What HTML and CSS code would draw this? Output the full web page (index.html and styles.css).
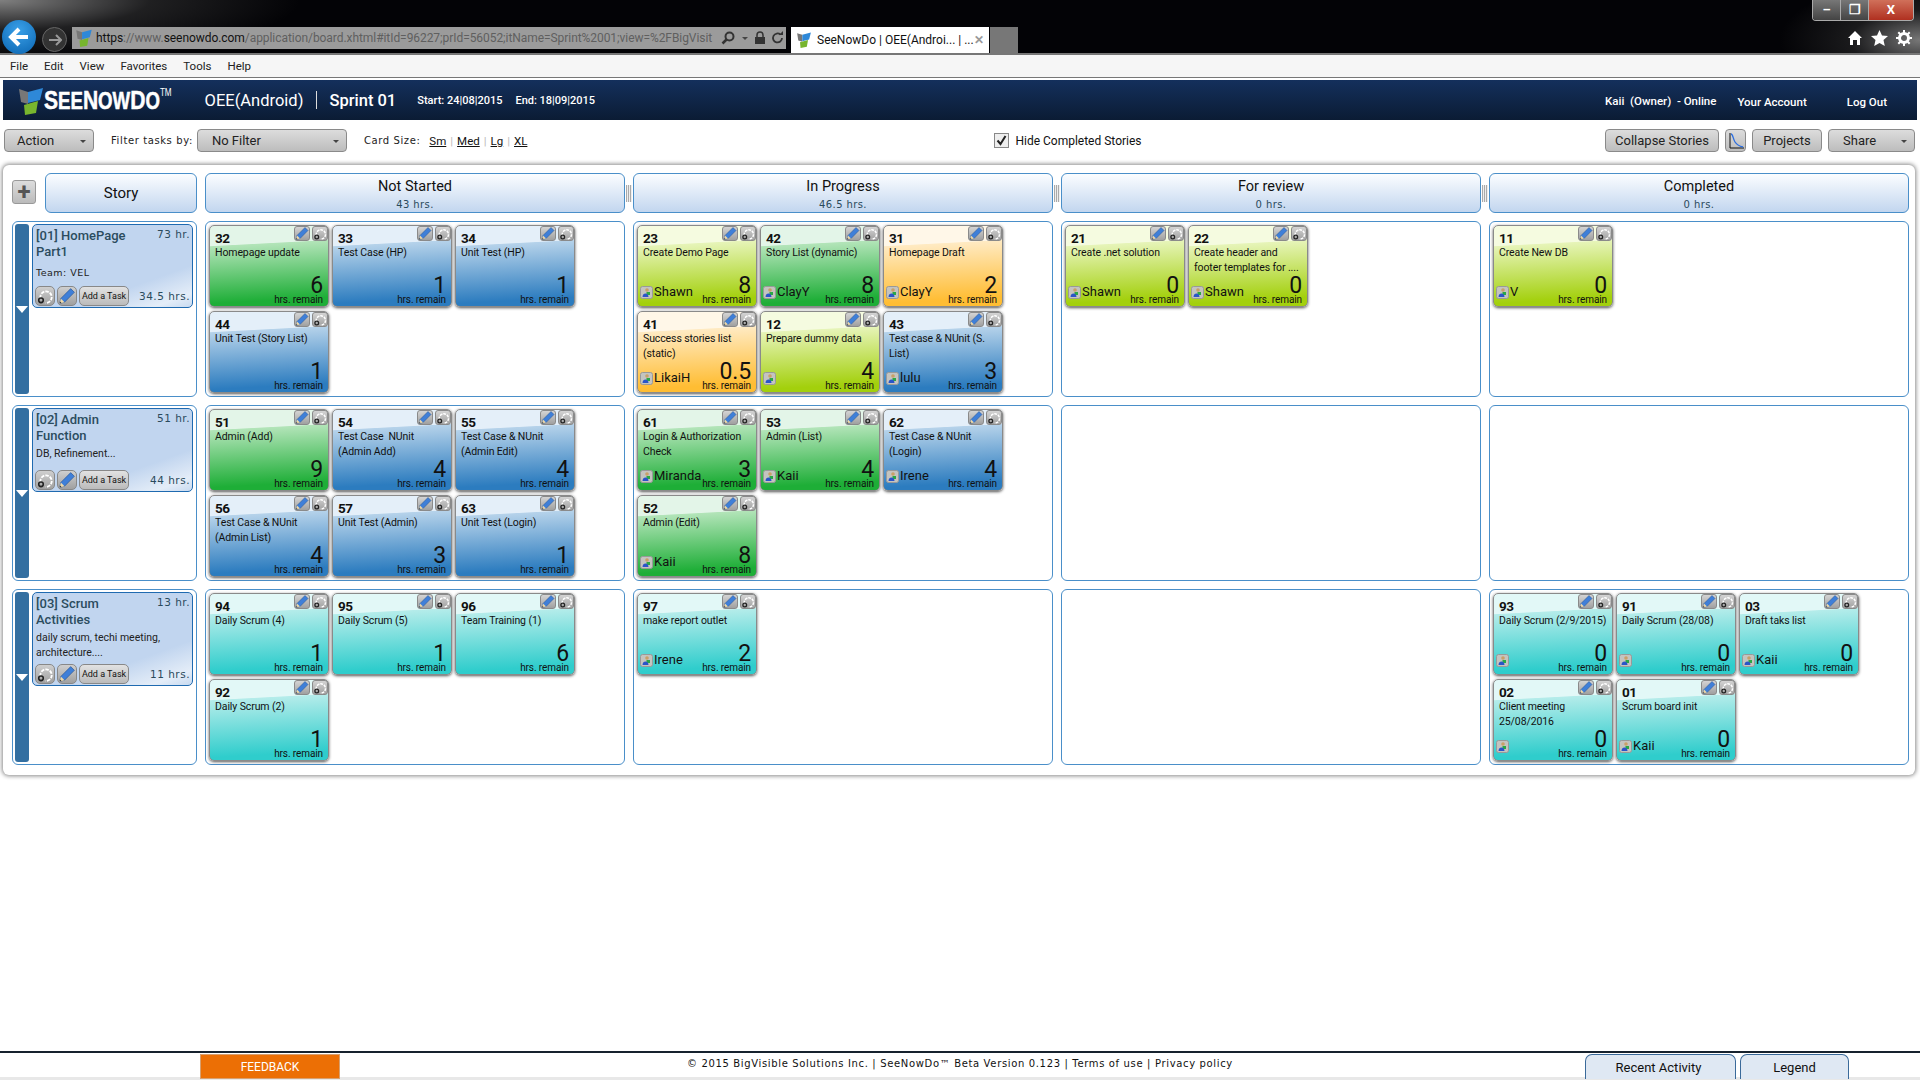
FILE: index.html
```html
<!DOCTYPE html>
<html lang="en">
<head>
  <meta charset="UTF-8">
  <title>SeeNowDo | OEE(Android)</title>
  <link rel="stylesheet" href="styles.css">
</head>
<body>
  <svg class="defs" width="0" height="0">
    <symbol id="i-pencil" viewBox="2 1 13 13">
      <path d="M2.500 13.500l1-4 8-8 3 3-8 8z" fill="#3f7fd8" stroke="#25508f" stroke-width=".5"/>
      <path d="M2.500 13.500l1-4 3 3z" fill="#f0d9a8"/>
      <path d="M2.500 13.500l.4-1.600 1.200 1.200z" fill="#333"/>
    </symbol>
    <symbol id="i-loop" viewBox="2 0 14 14">
      <path d="M5 9a5 5 0 1 1 4.500 4" fill="none" stroke="#fff" stroke-width="1.600" stroke-dasharray="3 1"/>
      <circle cx="5.500" cy="10.800" r="2" fill="none" stroke="#222" stroke-width="1.400"/>
    </symbol>
    <symbol id="i-user" viewBox="0 0 13 13">
      <rect x=".5" y=".5" width="12" height="12" rx="2" fill="#c4c4c0" stroke="#999"/>
      <circle cx="7" cy="4" r="1.800" fill="#c9a067"/>
      <path d="M6.500 6h3.500v3h-3.500z" fill="#2aa845"/>
      <path d="M2.500 11c0-2.500 1.500-3.500 3-3.500s3 1 3 3.500z" fill="#2a55c8"/>
    </symbol>
    <symbol id="i-logo" viewBox="0 0 24 28">
      <path d="M0 2l9 3v12l-7-2z" fill="#777"/>
      <path d="M9 5l15-4-3 12-12 3z" fill="#2e88d8"/>
      <path d="M5 18l14-4-2 12-11 2z" fill="#77b52e"/>
    </symbol>
  </svg>

  <div class="browser-bar">
    <div class="window-btns">
      <span class="win-btn">&#8211;</span><span class="win-btn">&#10064;</span><span class="win-btn win-close">X</span>
    </div>
    <div class="nav-back">
      <svg width="22" height="20" viewBox="0 0 22 20"><path d="M11 2l-8 8 8 8M3 10h17" fill="none" stroke="#fff" stroke-width="4"/></svg>
    </div>
    <div class="nav-forward">
      <svg width="14" height="12" viewBox="0 0 14 12"><path d="M8 1l5 5-5 5M13 6h-12" fill="none" stroke="#999" stroke-width="2"/></svg>
    </div>
    <div class="address">
      <svg class="favicon"><use href="#i-logo"></use></svg>
      <span class="url"><b>https</b>://www.<b>seenowdo.com</b>/application/board.xhtml#itId=96227;prId=56052;itName=Sprint%2001;view=%2FBigVisit</span>
      <span class="addr-icons">
        <svg width="16" height="16" viewBox="0 0 16 16"><circle cx="9.500" cy="6.500" r="4" fill="none" stroke="#333" stroke-width="2"/><path d="M6.500 9.500l-4 4" stroke="#333" stroke-width="2.500"/></svg>
        <svg width="8" height="16" viewBox="0 0 8 16"><path d="M1 7h6l-3 3z" fill="#444"/></svg>
        <svg width="12" height="16" viewBox="0 0 12 16"><rect x="1" y="7" width="10" height="7" fill="#333"/><path d="M3 7v-2a3 3 0 0 1 6 0v2" fill="none" stroke="#333" stroke-width="1.500"/></svg>
        <svg width="13" height="16" viewBox="0 0 13 16"><path d="M11 8a4.500 4.500 0 1 1-1.500-3.400" fill="none" stroke="#333" stroke-width="1.800"/><path d="M8 5h4v-4z" fill="#333"/></svg>
      </span>
    </div>
    <div class="tab">
      <svg class="tab-icon"><use href="#i-logo"></use></svg>
      <span class="tab-title">SeeNowDo | OEE(Androi... | ...</span>
      <span class="tab-close">&#10005;</span>
    </div>
    <div class="new-tab"></div>
    <div class="browser-tools">
      <svg width="16" height="16" viewBox="0 0 16 16"><path d="M8 1l7 7h-2v7h-3v-5h-4v5h-3v-7h-2z" fill="#fff"/></svg>
      <svg width="17" height="16" viewBox="0 0 17 16"><path d="M8.500 0l2.500 5.500 6 .6-4.500 4 1.300 5.900-5.300-3-5.300 3 1.300-5.900-4.500-4 6-.6z" fill="#fff"/></svg>
      <svg width="16" height="16" viewBox="0 0 16 16"><circle cx="8" cy="8" r="4.500" fill="none" stroke="#fff" stroke-width="3"/><path d="M8 0v3M8 13v3M0 8h3M13 8h3M2.300 2.300l2 2M11.700 11.700l2 2M13.700 2.300l-2 2M4.300 11.700l-2 2" stroke="#fff" stroke-width="2"/></svg>
    </div>
  </div>

  <div class="menu-bar">
    <span>File</span><span>Edit</span><span>View</span><span>Favorites</span><span>Tools</span><span>Help</span>
  </div>

  <header class="app-header">
    <svg class="logo-mark"><use href="#i-logo"></use></svg>
    <span class="logo-box"><span class="logo-text">S<small>EE</small>N<small>OW</small>D<small>O</small><sup>TM</sup></span></span>
    <span class="project">OEE(Android)</span>
    <span class="sep"></span>
    <span class="sprint">Sprint 01</span>
    <span class="date date-start">Start: 24|08|2015</span>
    <span class="date date-end">End: 18|09|2015</span>
    <span class="user">Kaii&nbsp; (Owner)&nbsp; - Online</span>
    <span class="user-link account">Your Account</span>
    <span class="user-link logout">Log Out</span>
  </header>

  <div class="toolbar">
    <button class="btn btn-action">Action<i class="caret"></i></button>
    <span class="tool-label filter-label">Filter tasks by:</span>
    <button class="btn btn-filter">No Filter<i class="caret"></i></button>
    <span class="tool-label size-label">Card Size:</span>
    <span class="sizes"><u>Sm</u><em>|</em><u>Med</u><em>|</em><u>Lg</u><em>|</em><u>XL</u></span>
    <label class="hide-done">
      <svg width="15" height="15" viewBox="0 0 15 15"><rect x=".5" y=".5" width="14" height="14" fill="#eee" stroke="#888"/><path d="M3.500 7.500l3 3.500 5-8" fill="none" stroke="#222" stroke-width="2"/></svg>
      Hide Completed Stories
    </label>
    <button class="btn btn-collapse">Collapse Stories</button>
    <button class="btn btn-chart">
      <svg width="17" height="17" viewBox="0 0 17 17"><path d="M2 1v15h14" fill="none" stroke="#111"/><path d="M3 2c2 0 2 5 4 8 2 3 4 4 8 5" fill="none" stroke="#2a6de0" stroke-width="1.300"/></svg>
    </button>
    <button class="btn btn-projects">Projects</button>
    <button class="btn btn-share">Share<i class="caret"></i></button>
  </div>

  <main class="board">
    <div class="head-story">
      <button class="add-story">+</button>
      <div class="col-head story-head"><strong>Story</strong></div>
    </div>
    <div class="col-head grip"><strong>Not Started</strong><small>43 hrs.</small></div>
    <div class="col-head grip"><strong>In Progress</strong><small>46.5 hrs.</small></div>
    <div class="col-head grip"><strong>For review</strong><small>0 hrs.</small></div>
    <div class="col-head"><strong>Completed</strong><small>0 hrs.</small></div>

    <!-- story 01 -->
    <div class="cell story-cell">
      <div class="stripe"><i></i></div>
      <div class="story">
        <div class="story-top"><span class="story-title">[01] HomePage Part1</span><span class="story-hrs">73 hr.</span></div>
        <p class="story-note story-team">Team: VEL</p>
        <div class="story-foot">
          <svg class="story-tool"><use href="#i-loop"></use></svg>
          <svg class="story-tool"><use href="#i-pencil"></use></svg>
          <button class="add-task">Add a Task</button>
          <span class="story-left">34.5 hrs.</span>
        </div>
      </div>
    </div>
    <div class="cell">
      <div class="card green"><span class="tools"><svg><use href="#i-pencil"></use></svg><svg><use href="#i-loop"></use></svg></span><b class="card-id">32</b><p class="card-name">Homepage update</p><div class="card-foot"><span class="hrs"><b>6</b>hrs. remain</span></div></div>
      <div class="card blue"><span class="tools"><svg><use href="#i-pencil"></use></svg><svg><use href="#i-loop"></use></svg></span><b class="card-id">33</b><p class="card-name">Test Case (HP)</p><div class="card-foot"><span class="hrs"><b>1</b>hrs. remain</span></div></div>
      <div class="card blue"><span class="tools"><svg><use href="#i-pencil"></use></svg><svg><use href="#i-loop"></use></svg></span><b class="card-id">34</b><p class="card-name">Unit Test (HP)</p><div class="card-foot"><span class="hrs"><b>1</b>hrs. remain</span></div></div>
      <div class="card blue"><span class="tools"><svg><use href="#i-pencil"></use></svg><svg><use href="#i-loop"></use></svg></span><b class="card-id">44</b><p class="card-name">Unit Test (Story List)</p><div class="card-foot"><span class="hrs"><b>1</b>hrs. remain</span></div></div>
    </div>
    <div class="cell">
      <div class="card lime"><span class="tools"><svg><use href="#i-pencil"></use></svg><svg><use href="#i-loop"></use></svg></span><b class="card-id">23</b><p class="card-name">Create Demo Page</p><div class="card-foot"><span class="owner"><svg><use href="#i-user"></use></svg>Shawn</span><span class="hrs"><b>8</b>hrs. remain</span></div></div>
      <div class="card green"><span class="tools"><svg><use href="#i-pencil"></use></svg><svg><use href="#i-loop"></use></svg></span><b class="card-id">42</b><p class="card-name">Story List (dynamic)</p><div class="card-foot"><span class="owner"><svg><use href="#i-user"></use></svg>ClayY</span><span class="hrs"><b>8</b>hrs. remain</span></div></div>
      <div class="card orange"><span class="tools"><svg><use href="#i-pencil"></use></svg><svg><use href="#i-loop"></use></svg></span><b class="card-id">31</b><p class="card-name">Homepage Draft</p><div class="card-foot"><span class="owner"><svg><use href="#i-user"></use></svg>ClayY</span><span class="hrs"><b>2</b>hrs. remain</span></div></div>
      <div class="card orange"><span class="tools"><svg><use href="#i-pencil"></use></svg><svg><use href="#i-loop"></use></svg></span><b class="card-id">41</b><p class="card-name">Success stories list (static)</p><div class="card-foot"><span class="owner"><svg><use href="#i-user"></use></svg>LikaiH</span><span class="hrs"><b>0.5</b>hrs. remain</span></div></div>
      <div class="card lime"><span class="tools"><svg><use href="#i-pencil"></use></svg><svg><use href="#i-loop"></use></svg></span><b class="card-id">12</b><p class="card-name">Prepare dummy data</p><div class="card-foot"><span class="owner"><svg><use href="#i-user"></use></svg></span><span class="hrs"><b>4</b>hrs. remain</span></div></div>
      <div class="card blue"><span class="tools"><svg><use href="#i-pencil"></use></svg><svg><use href="#i-loop"></use></svg></span><b class="card-id">43</b><p class="card-name">Test case &amp; NUnit (S. List)</p><div class="card-foot"><span class="owner"><svg><use href="#i-user"></use></svg>lulu</span><span class="hrs"><b>3</b>hrs. remain</span></div></div>
    </div>
    <div class="cell">
      <div class="card lime"><span class="tools"><svg><use href="#i-pencil"></use></svg><svg><use href="#i-loop"></use></svg></span><b class="card-id">21</b><p class="card-name">Create .net solution</p><div class="card-foot"><span class="owner"><svg><use href="#i-user"></use></svg>Shawn</span><span class="hrs"><b>0</b>hrs. remain</span></div></div>
      <div class="card lime"><span class="tools"><svg><use href="#i-pencil"></use></svg><svg><use href="#i-loop"></use></svg></span><b class="card-id">22</b><p class="card-name">Create header and footer templates for ....</p><div class="card-foot"><span class="owner"><svg><use href="#i-user"></use></svg>Shawn</span><span class="hrs"><b>0</b>hrs. remain</span></div></div>
    </div>
    <div class="cell">
      <div class="card lime"><span class="tools"><svg><use href="#i-pencil"></use></svg><svg><use href="#i-loop"></use></svg></span><b class="card-id">11</b><p class="card-name">Create New DB</p><div class="card-foot"><span class="owner"><svg><use href="#i-user"></use></svg>V</span><span class="hrs"><b>0</b>hrs. remain</span></div></div>
    </div>

    <!-- story 02 -->
    <div class="cell story-cell">
      <div class="stripe"><i></i></div>
      <div class="story">
        <div class="story-top"><span class="story-title">[02] Admin Function</span><span class="story-hrs">51 hr.</span></div>
        <p class="story-note">DB, Refinement...</p>
        <div class="story-foot">
          <svg class="story-tool"><use href="#i-loop"></use></svg>
          <svg class="story-tool"><use href="#i-pencil"></use></svg>
          <button class="add-task">Add a Task</button>
          <span class="story-left">44 hrs.</span>
        </div>
      </div>
    </div>
    <div class="cell">
      <div class="card green"><span class="tools"><svg><use href="#i-pencil"></use></svg><svg><use href="#i-loop"></use></svg></span><b class="card-id">51</b><p class="card-name">Admin (Add)</p><div class="card-foot"><span class="hrs"><b>9</b>hrs. remain</span></div></div>
      <div class="card blue"><span class="tools"><svg><use href="#i-pencil"></use></svg><svg><use href="#i-loop"></use></svg></span><b class="card-id">54</b><p class="card-name">Test Case&nbsp; NUnit (Admin Add)</p><div class="card-foot"><span class="hrs"><b>4</b>hrs. remain</span></div></div>
      <div class="card blue"><span class="tools"><svg><use href="#i-pencil"></use></svg><svg><use href="#i-loop"></use></svg></span><b class="card-id">55</b><p class="card-name">Test Case &amp; NUnit (Admin Edit)</p><div class="card-foot"><span class="hrs"><b>4</b>hrs. remain</span></div></div>
      <div class="card blue"><span class="tools"><svg><use href="#i-pencil"></use></svg><svg><use href="#i-loop"></use></svg></span><b class="card-id">56</b><p class="card-name">Test Case &amp; NUnit (Admin List)</p><div class="card-foot"><span class="hrs"><b>4</b>hrs. remain</span></div></div>
      <div class="card blue"><span class="tools"><svg><use href="#i-pencil"></use></svg><svg><use href="#i-loop"></use></svg></span><b class="card-id">57</b><p class="card-name">Unit Test (Admin)</p><div class="card-foot"><span class="hrs"><b>3</b>hrs. remain</span></div></div>
      <div class="card blue"><span class="tools"><svg><use href="#i-pencil"></use></svg><svg><use href="#i-loop"></use></svg></span><b class="card-id">63</b><p class="card-name">Unit Test (Login)</p><div class="card-foot"><span class="hrs"><b>1</b>hrs. remain</span></div></div>
    </div>
    <div class="cell">
      <div class="card green"><span class="tools"><svg><use href="#i-pencil"></use></svg><svg><use href="#i-loop"></use></svg></span><b class="card-id">61</b><p class="card-name">Login &amp; Authorization Check</p><div class="card-foot"><span class="owner"><svg><use href="#i-user"></use></svg>Miranda</span><span class="hrs"><b>3</b>hrs. remain</span></div></div>
      <div class="card green"><span class="tools"><svg><use href="#i-pencil"></use></svg><svg><use href="#i-loop"></use></svg></span><b class="card-id">53</b><p class="card-name">Admin (List)</p><div class="card-foot"><span class="owner"><svg><use href="#i-user"></use></svg>Kaii</span><span class="hrs"><b>4</b>hrs. remain</span></div></div>
      <div class="card blue"><span class="tools"><svg><use href="#i-pencil"></use></svg><svg><use href="#i-loop"></use></svg></span><b class="card-id">62</b><p class="card-name">Test Case &amp; NUnit (Login)</p><div class="card-foot"><span class="owner"><svg><use href="#i-user"></use></svg>Irene</span><span class="hrs"><b>4</b>hrs. remain</span></div></div>
      <div class="card green"><span class="tools"><svg><use href="#i-pencil"></use></svg><svg><use href="#i-loop"></use></svg></span><b class="card-id">52</b><p class="card-name">Admin (Edit)</p><div class="card-foot"><span class="owner"><svg><use href="#i-user"></use></svg>Kaii</span><span class="hrs"><b>8</b>hrs. remain</span></div></div>
    </div>
    <div class="cell"></div>
    <div class="cell"></div>

    <!-- story 03 -->
    <div class="cell story-cell">
      <div class="stripe"><i></i></div>
      <div class="story story-tall">
        <div class="story-top"><span class="story-title">[03] Scrum Activities</span><span class="story-hrs">13 hr.</span></div>
        <p class="story-note">daily scrum, techi meeting, architecture....</p>
        <div class="story-foot">
          <svg class="story-tool"><use href="#i-loop"></use></svg>
          <svg class="story-tool"><use href="#i-pencil"></use></svg>
          <button class="add-task">Add a Task</button>
          <span class="story-left">11 hrs.</span>
        </div>
      </div>
    </div>
    <div class="cell">
      <div class="card teal"><span class="tools"><svg><use href="#i-pencil"></use></svg><svg><use href="#i-loop"></use></svg></span><b class="card-id">94</b><p class="card-name">Daily Scrum (4)</p><div class="card-foot"><span class="hrs"><b>1</b>hrs. remain</span></div></div>
      <div class="card teal"><span class="tools"><svg><use href="#i-pencil"></use></svg><svg><use href="#i-loop"></use></svg></span><b class="card-id">95</b><p class="card-name">Daily Scrum (5)</p><div class="card-foot"><span class="hrs"><b>1</b>hrs. remain</span></div></div>
      <div class="card teal"><span class="tools"><svg><use href="#i-pencil"></use></svg><svg><use href="#i-loop"></use></svg></span><b class="card-id">96</b><p class="card-name">Team Training (1)</p><div class="card-foot"><span class="hrs"><b>6</b>hrs. remain</span></div></div>
      <div class="card teal"><span class="tools"><svg><use href="#i-pencil"></use></svg><svg><use href="#i-loop"></use></svg></span><b class="card-id">92</b><p class="card-name">Daily Scrum (2)</p><div class="card-foot"><span class="hrs"><b>1</b>hrs. remain</span></div></div>
    </div>
    <div class="cell">
      <div class="card teal"><span class="tools"><svg><use href="#i-pencil"></use></svg><svg><use href="#i-loop"></use></svg></span><b class="card-id">97</b><p class="card-name">make report outlet</p><div class="card-foot"><span class="owner"><svg><use href="#i-user"></use></svg>Irene</span><span class="hrs"><b>2</b>hrs. remain</span></div></div>
    </div>
    <div class="cell"></div>
    <div class="cell">
      <div class="card teal"><span class="tools"><svg><use href="#i-pencil"></use></svg><svg><use href="#i-loop"></use></svg></span><b class="card-id">93</b><p class="card-name">Daily Scrum (2/9/2015)</p><div class="card-foot"><span class="owner"><svg><use href="#i-user"></use></svg></span><span class="hrs"><b>0</b>hrs. remain</span></div></div>
      <div class="card teal"><span class="tools"><svg><use href="#i-pencil"></use></svg><svg><use href="#i-loop"></use></svg></span><b class="card-id">91</b><p class="card-name">Daily Scrum (28/08)</p><div class="card-foot"><span class="owner"><svg><use href="#i-user"></use></svg></span><span class="hrs"><b>0</b>hrs. remain</span></div></div>
      <div class="card teal"><span class="tools"><svg><use href="#i-pencil"></use></svg><svg><use href="#i-loop"></use></svg></span><b class="card-id">03</b><p class="card-name">Draft taks list</p><div class="card-foot"><span class="owner"><svg><use href="#i-user"></use></svg>Kaii</span><span class="hrs"><b>0</b>hrs. remain</span></div></div>
      <div class="card teal"><span class="tools"><svg><use href="#i-pencil"></use></svg><svg><use href="#i-loop"></use></svg></span><b class="card-id">02</b><p class="card-name">Client meeting 25/08/2016</p><div class="card-foot"><span class="owner"><svg><use href="#i-user"></use></svg></span><span class="hrs"><b>0</b>hrs. remain</span></div></div>
      <div class="card teal"><span class="tools"><svg><use href="#i-pencil"></use></svg><svg><use href="#i-loop"></use></svg></span><b class="card-id">01</b><p class="card-name">Scrum board init</p><div class="card-foot"><span class="owner"><svg><use href="#i-user"></use></svg>Kaii</span><span class="hrs"><b>0</b>hrs. remain</span></div></div>
    </div>
  </main>

  <footer class="footer">
    <button class="feedback">FEEDBACK</button>
    <p class="copyright">&copy; 2015 BigVisible Solutions Inc. | SeeNowDo&trade; Beta Version 0.123 | Terms of use | Privacy policy</p>
    <div class="foot-tabs">
      <span class="foot-tab tab-recent">Recent Activity</span>
      <span class="foot-tab tab-legend">Legend</span>
    </div>
  </footer>
</body>
</html>
```
FILE: styles.css
```css
* {
  box-sizing: border-box;
}

body {
  margin: 0;
  height: 1080px;
  display: flex;
  flex-direction: column;
  overflow: hidden;
  background-color: #fff;
  color: #111;
  font-family: Roboto, "Liberation Sans", sans-serif;
}

.defs {
  position: absolute;
}

p {
  margin: 0;
}

button {
  font-family: inherit;
  cursor: pointer;
}

/* browser chrome */
.browser-bar {
  position: relative;
  flex: 0 0 55px;
  display: flex;
  align-items: flex-start;
  padding-top: 27px;
  background-color: #030306;
  background-image:
    radial-gradient(ellipse 300px 60px at 0 0, #808080, rgba(60, 60, 60, 0.5) 50%, transparent),
    radial-gradient(ellipse 140px 60px at 100% 40px, #777, rgba(60, 60, 60, 0.4) 50%, transparent);
  border-bottom: 2px solid #777;
}

.window-btns {
  position: absolute;
  top: 0;
  right: 6px;
  display: flex;
  width: 102px;
  height: 21px;
  border: 1px solid #aaa;
  border-top: 0;
  border-radius: 0 0 4px 4px;
  overflow: hidden;
}

.win-btn {
  flex: 1;
  text-align: center;
  color: #fff;
  font-size: 13px;
  font-weight: 700;
  line-height: 19px;
  background: linear-gradient(#777, #444);
  border-right: 1px solid #aaa;
}

.win-close {
  flex: 0 0 44px;
  border-right: 0;
  background: linear-gradient(#d0705a, #b03020);
}

.nav-back {
  position: absolute;
  left: 2px;
  top: 20px;
  width: 34px;
  height: 34px;
  display: flex;
  align-items: center;
  justify-content: center;
  border-radius: 50%;
  background: radial-gradient(circle at 50% 30%, #3aa0e8, #0a64b0);
}

.nav-forward {
  position: absolute;
  left: 42px;
  top: 27px;
  width: 25px;
  height: 25px;
  display: flex;
  align-items: center;
  justify-content: center;
  border: 1px solid #666;
  border-radius: 50%;
  background-color: #333;
}

.address {
  display: flex;
  align-items: center;
  width: 714px;
  height: 22px;
  margin-left: 72px;
  padding-left: 3px;
  background-color: #9b9b9b;
  color: #5f5f5f;
  font-size: 12px;
  letter-spacing: -0.06px;
  white-space: nowrap;
  overflow: hidden;
}

.address b {
  font-weight: 400;
  color: #111;
}

.favicon {
  flex: none;
  width: 18px;
  height: 18px;
  margin-right: 3px;
}

.url {
  width: 620px;
  overflow: hidden;
}

.addr-icons {
  display: flex;
  gap: 5px;
  margin-left: 4px;
}

.tab {
  display: flex;
  align-items: center;
  width: 198px;
  height: 26px;
  margin-left: 5px;
  padding: 0 6px 0 5px;
  background-color: #fff;
  color: #111;
  font-size: 12px;
}

.tab-icon {
  flex: none;
  width: 16px;
  height: 16px;
  margin-right: 5px;
}

.tab-title {
  flex: 1;
  white-space: nowrap;
}

.tab-close {
  color: #999;
  font-size: 12px;
  font-weight: 700;
}

.new-tab {
  width: 28px;
  height: 26px;
  margin-left: 1px;
  background-color: #777;
}

.browser-tools {
  display: flex;
  gap: 8px;
  margin-left: auto;
  padding: 3px 8px 0 0;
}

.menu-bar {
  flex: 0 0 23px;
  display: flex;
  align-items: center;
  gap: 16px;
  padding-left: 10px;
  background-color: #f6f6f6;
  border-bottom: 1px solid #777;
  font-size: 11.500px;
  color: #222;
}

/* app header */
.app-header {
  flex: 0 0 40px;
  display: flex;
  align-items: center;
  margin: 2px 3px 0;
  color: #fff;
  background: linear-gradient(#14305c, #0b1c34);
  white-space: nowrap;
}

.logo-mark {
  width: 24px;
  height: 28px;
  margin: 2px 0 0 16px;
}

.logo-box {
  flex: 0 0 122px;
  margin-left: 1px;
}

.logo-text {
  display: inline-block;
  font-family: "Liberation Sans", sans-serif;
  font-size: 26px;
  font-weight: 700;
  line-height: 1;
  transform: scaleX(0.81);
  transform-origin: left center;
  -webkit-text-stroke: 0.5px #fff;
}

.logo-text small {
  font-size: 23px;
}

.logo-text sup {
  font-size: 10px;
  font-weight: 400;
  vertical-align: 13px;
  line-height: 0;
  -webkit-text-stroke: 0;
}

.project {
  margin-left: 3px;
  font-size: 16.500px;
}

.sep {
  width: 1px;
  height: 18px;
  margin: 0 12px 0 13px;
  background-color: #ddd;
}

.sprint {
  font-size: 16.500px;
  font-weight: 500;
}

.date {
  font-size: 11px;
  font-weight: 500;
  padding-top: 1px;
}

.date-start {
  margin-left: 21px;
}

.date-end {
  margin-left: 13px;
}

.user {
  margin-left: auto;
  font-size: 11.500px;
  font-weight: 500;
  padding-top: 2px;
}

.user-link {
  font-size: 11.500px;
  font-weight: 500;
  padding-top: 3px;
}

.account {
  margin-left: 21px;
}

.logout {
  margin: 0 30px 0 40px;
}

/* toolbar */
.toolbar {
  flex: 0 0 45px;
  display: flex;
  align-items: center;
  padding: 0 5px 4px 4px;
  font-size: 12px;
}

.btn {
  position: relative;
  height: 23px;
  padding: 0 14px;
  border: 1px solid #8a8a8a;
  border-radius: 4px;
  background: linear-gradient(#dcdcdc, #bdbdbd);
  color: #222;
  font-size: 13px;
  text-align: left;
}

.caret {
  position: absolute;
  right: 7px;
  top: 10px;
  border: 3px solid transparent;
  border-top: 3px solid #444;
  border-bottom: 0;
}

.btn-action {
  width: 90px;
  padding: 0 12px;
}

.btn-filter {
  width: 150px;
  margin-left: 4px;
}

.tool-label {
  font-family: "DejaVu Sans", sans-serif;
  font-size: 10px;
  color: #222;
  letter-spacing: 0.6px;
}

.filter-label {
  margin-left: 17px;
}

.size-label {
  margin-left: 17px;
}

.sizes {
  display: flex;
  gap: 4px;
  margin-left: 9px;
  font-size: 11.500px;
}

.sizes em {
  color: #bbb;
  font-style: normal;
}

.hide-done {
  display: flex;
  align-items: center;
  gap: 6px;
  margin-left: 467px;
  font-size: 12px;
}

.btn-collapse {
  width: 114px;
  margin-left: auto;
  padding: 0;
  text-align: center;
}

.btn-chart {
  width: 21px;
  margin-left: 6px;
  padding: 2px;
}

.btn-projects {
  width: 70px;
  margin-left: 6px;
  padding: 0;
  text-align: center;
}

.btn-share {
  width: 87px;
  margin-left: 6px;
}

/* board */
.board {
  display: grid;
  grid-template-columns: 185px repeat(4, 420px);
  grid-template-rows: 40px repeat(3, 176px);
  gap: 8px;
  height: 610px;
  margin: 0 5px 0 3px;
  padding: 8px 0 0 9px;
  border-radius: 6px;
  background-color: #fff;
  box-shadow: 0 0 4px 1px #888;
}

.head-story {
  display: flex;
  align-items: flex-start;
  gap: 9px;
}

.add-story {
  width: 24px;
  height: 24px;
  margin-top: 7px;
  padding: 0;
  border: 1px solid #999;
  border-radius: 3px;
  background: linear-gradient(#ddd, #bbb);
  color: #555;
  font-size: 24px;
  font-weight: 700;
  line-height: 20px;
}

.col-head {
  position: relative;
  display: flex;
  flex-direction: column;
  align-items: center;
  justify-content: center;
  border: 1px solid #4a8fc9;
  border-radius: 6px;
  background: linear-gradient(#fbfdff, #c2d6ef);
}

.col-head strong {
  margin-top: 2px;
  font-size: 14.500px;
  font-weight: 400;
  line-height: 20px;
}

.col-head small {
  margin-top: 2px;
  font-family: "DejaVu Sans", sans-serif;
  font-size: 10px;
  line-height: 12px;
  letter-spacing: 0.4px;
  color: #2a4a5c;
}

.story-head {
  flex: 1;
  height: 40px;
}

.story-head strong {
  margin-top: 0;
  font-size: 15px;
}

.grip::after {
  content: "";
  position: absolute;
  right: -8px;
  top: 11px;
  width: 6px;
  height: 17px;
  background: repeating-linear-gradient(90deg, #aaa 0 1px, #eee 1px 2px);
}

.cell {
  display: flex;
  flex-wrap: wrap;
  align-content: flex-start;
  gap: 4px 3px;
  padding: 3px;
  border: 1px solid #4a8fc9;
  border-radius: 6px;
}

.story-cell {
  flex-wrap: nowrap;
  gap: 3px;
  padding: 2px 3px 2px 2px;
}

.stripe {
  position: relative;
  flex: 0 0 14px;
  border-radius: 3px;
  background-color: #336fa1;
}

.stripe i {
  position: absolute;
  top: 82px;
  left: 1px;
  border: 6px solid transparent;
  border-top: 7px solid #fff;
  border-bottom: 0;
}

.story {
  flex: 1;
  display: flex;
  flex-direction: column;
  height: 84px;
  padding: 3px 2px 0 2px;
  border: 1px solid #1f6ab0;
  border-radius: 5px;
  background: linear-gradient(160deg, #c1d5ef 70%, #e4edf8 90%, #c8daf0);
}

.story-tall {
  height: 94px;
}

.story-top {
  display: flex;
  justify-content: space-between;
  align-items: flex-start;
}

.story-title {
  width: 106px;
  padding-left: 1px;
  font-size: 13px;
  font-weight: 500;
  line-height: 16px;
  color: #2b4c5e;
}

.story-hrs,
.story-left {
  font-family: "DejaVu Sans", sans-serif;
  font-size: 10.500px;
  letter-spacing: 0.5px;
  color: #2a4a5c;
  white-space: nowrap;
}

.story-note {
  padding: 2px 0 0 1px;
  font-size: 10.500px;
  line-height: 15px;
  color: #222;
}

.story-team {
  padding-top: 5px;
  font-family: "DejaVu Sans", sans-serif;
  font-size: 9.500px;
  letter-spacing: 0.5px;
}

.story-foot {
  display: flex;
  align-items: center;
  gap: 2px;
  margin-top: auto;
  margin-bottom: 1px;
}

.story-tool {
  width: 20px;
  height: 20px;
  padding: 1px;
  border: 1px solid #888;
  border-radius: 5px;
  background: linear-gradient(#cfcfcf, #a0a0a0);
}

.add-task {
  width: 50px;
  height: 20px;
  padding: 0;
  border: 1px solid #888;
  border-radius: 5px;
  background: linear-gradient(#e2e2e2, #bbb);
  color: #111;
  font-size: 9px;
}

.story-left {
  margin-left: auto;
}

/* task cards */
.card {
  position: relative;
  display: flex;
  flex-direction: column;
  width: 120px;
  height: 82px;
  padding: 4px 5px 0 5px;
  border: 1px solid #8a8a8a;
  border-radius: 5px;
  box-shadow: 0 1px 3px #555;
  background: linear-gradient(177deg, var(--top) 0 23%, var(--mid) 24%, var(--bot) 90%);
}

.green {
  --top: #e3f5e8;
  --mid: #b2e4b8;
  --bot: #1eae37;
}

.blue {
  --top: #e4eff9;
  --mid: #b5d2ea;
  --bot: #2c7cbf;
}

.lime {
  --top: #f5fbe0;
  --mid: #e6f4b8;
  --bot: #a3d00c;
}

.orange {
  --top: #fff7e8;
  --mid: #ffeac2;
  --bot: #ffbd33;
}

.teal {
  --top: #e2f8f7;
  --mid: #b4ecea;
  --bot: #2fcdcc;
}

.tools {
  position: absolute;
  top: 0;
  right: 0;
  display: flex;
  gap: 2px;
}

.tools svg {
  width: 16px;
  height: 15px;
  border: 1px solid #8a8a8a;
  border-radius: 3px;
  background: linear-gradient(#d4d4d4, #a0a0a0);
}

.card-id {
  align-self: flex-start;
  margin-top: 1px;
  font-size: 13.500px;
  font-weight: 700;
  line-height: 15px;
  letter-spacing: -0.6px;
}

.card-name {
  max-width: 113px;
  margin: -1px 0 -10px;
  font-size: 10.500px;
  line-height: 15px;
  letter-spacing: -0.1px;
}

.card-foot {
  display: flex;
  justify-content: space-between;
  align-items: flex-end;
  margin-top: auto;
}

.owner {
  display: flex;
  align-items: center;
  gap: 1px;
  margin: 0 0 7px -3px;
  font-size: 13px;
  line-height: 14px;
}

.owner svg {
  width: 13px;
  height: 13px;
}

.hrs {
  margin-left: auto;
  text-align: right;
  font-size: 10px;
  letter-spacing: -0.1px;
  line-height: 11px;
  padding-bottom: 1px;
}

.hrs b {
  display: block;
  font-size: 23px;
  font-weight: 400;
  line-height: 16px;
}

/* footer */
.footer {
  position: relative;
  display: flex;
  align-items: flex-start;
  height: 29px;
  margin-top: auto;
  border-top: 2px solid #16222e;
  background-color: #fff;
}

.footer::after {
  content: "";
  position: absolute;
  left: 0;
  right: 0;
  bottom: 0;
  height: 3px;
  background-color: #e8e8e8;
}

.feedback {
  position: relative;
  z-index: 1;
  width: 140px;
  height: 25px;
  margin: 1px 0 0 200px;
  border: 1px solid #d8a070;
  background-color: #ec6f05;
  color: #fff;
  font-size: 12px;
}

.copyright {
  margin: 5px 0 0 347px;
  font-family: "DejaVu Sans", sans-serif;
  font-size: 10px;
  letter-spacing: 0.65px;
  color: #111;
  white-space: nowrap;
}

.foot-tabs {
  position: relative;
  z-index: 1;
  display: flex;
  gap: 4px;
  margin-left: auto;
  margin-right: 71px;
  padding-top: 1px;
}

.foot-tab {
  height: 25px;
  border: 1px solid #3a6a9a;
  border-bottom: 0;
  border-radius: 7px 7px 0 0;
  background-color: #dfe8f3;
  font-size: 13px;
  line-height: 26px;
  text-align: center;
}

.tab-recent {
  width: 151px;
  padding-right: 4px;
}

.tab-legend {
  width: 109px;
}
```
